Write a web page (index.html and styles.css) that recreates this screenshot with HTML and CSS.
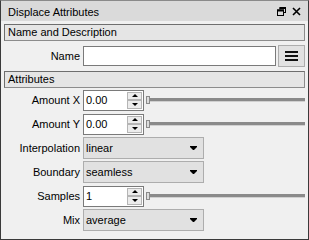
FILE: index.html
```html
<!DOCTYPE html>
<html>
<head>
<meta charset="utf-8">
<link rel="stylesheet" href="styles.css">
</head>
<body>
<div class="window">
  <div class="titlebar">
    <span class="title">Displace Attributes</span>
    <span class="tools">
      <svg class="ico" width="9" height="9" viewBox="0 0 9 9"><path d="M3 0.5h5.5v5.5M3 0.5v2M8.5 5.5h-2" fill="none" stroke="#000" stroke-width="1"/><rect x="0.5" y="3" width="6" height="5.5" fill="none" stroke="#000" stroke-width="1"/><rect x="0" y="2.5" width="7" height="2" fill="#000"/><rect x="2.5" y="0" width="6.5" height="2" fill="#000"/></svg>
      <svg class="ico" width="9" height="9" viewBox="0 0 9 9"><path d="M1 1L8 8M8 1L1 8" stroke="#000" stroke-width="1.6"/></svg>
    </span>
  </div>
  <div class="content">
    <div class="section">Name and Description</div>
    <div class="row name-row">
      <span class="lbl">Name</span>
      <div class="textfield"></div>
      <div class="menubtn"><span></span><span></span><span></span></div>
    </div>
    <div class="section">Attributes</div>
    <div class="form">
      <div class="row">
        <span class="lbl">Amount X</span>
        <div class="spin"><span class="val">0.00</span><span class="arrows"><i class="up"></i><i class="dn"></i></span></div>
        <div class="slider"><span class="handle"></span></div>
      </div>
      <div class="row">
        <span class="lbl">Amount Y</span>
        <div class="spin"><span class="val">0.00</span><span class="arrows"><i class="up"></i><i class="dn"></i></span></div>
        <div class="slider"><span class="handle"></span></div>
      </div>
      <div class="row">
        <span class="lbl">Interpolation</span>
        <div class="combo"><span class="val">linear</span><span class="caret"></span></div>
      </div>
      <div class="row">
        <span class="lbl">Boundary</span>
        <div class="combo"><span class="val">seamless</span><span class="caret"></span></div>
      </div>
      <div class="row">
        <span class="lbl">Samples</span>
        <div class="spin"><span class="val">1</span><span class="arrows"><i class="up"></i><i class="dn"></i></span></div>
        <div class="slider"><span class="handle"></span></div>
      </div>
      <div class="row">
        <span class="lbl">Mix</span>
        <div class="combo"><span class="val">average</span><span class="caret"></span></div>
      </div>
    </div>
  </div>
</div>
</body>
</html>
```

FILE: styles.css
```css
* { box-sizing: border-box; }
html, body { margin: 0; padding: 0; }
body {
  width: 309px; height: 240px; overflow: hidden;
  font-family: "Liberation Sans", Arial, sans-serif;
  font-size: 11px; color: #000;
}
.window {
  width: 309px; height: 240px;
  background: #f0f0f0;
  border: 1px solid #3a3a3a;
  border-top-color: #8a8a8a;
  display: flex; flex-direction: column;
}
.titlebar {
  height: 20px; background: #dadada; flex: none;
  display: flex; align-items: center; justify-content: space-between;
  padding: 1px 7px 0 7px;
}
.tools { display: flex; gap: 6px; align-items: center; }
.ico { display: block; }
.content { padding: 3px 3px 0 3px; display: flex; flex-direction: column; }
.section {
  height: 17px; line-height: 15px; flex: none;
  background: #e5e5e5;
  border: 1px solid #8c8c8c;
  border-top-color: #6e6e6e; border-left-color: #6e6e6e;
  padding-left: 3px;
}
.row { display: flex; align-items: center; height: 24px; flex: none; }
.name-row { height: 22px; margin: 4px 0 4px; }
.lbl { width: 79px; min-width: 79px; text-align: right; padding-right: 3px; flex: none; white-space: nowrap; }
.textfield {
  width: 193px; height: 20px; background: #fff;
  border: 1px solid #7a7a7a; flex: none;
}
.menubtn {
  margin-left: 2px; width: 27px; height: 22px; flex: none;
  background: #e1e1e1; border: 1px solid #adadad;
  display: flex; flex-direction: column; align-items: center; justify-content: center; gap: 2px;
}
.menubtn span { display: block; width: 13px; height: 2px; background: #111; }
.form { display: flex; flex-direction: column; }
.spin {
  width: 61px; height: 21px; background: #fff;
  border: 1px solid #7a7a7a; flex: none;
  display: flex; align-items: center; justify-content: space-between;
  padding-left: 2px;
}
.arrows {
  width: 15px; height: 17px; margin-right: 1px;
  display: flex; flex-direction: column;
}
.arrows i {
  flex: 1; background: #ececec; border: 1px solid #b5b5b5; position: relative;
}
.arrows i::after {
  content: ""; position: absolute; left: 50%; top: 50%;
  width: 0; height: 0; margin-left: -3px;
  border-left: 3px solid transparent; border-right: 3px solid transparent;
}
.arrows .up::after { margin-top: -2px; border-bottom: 3px solid #000; }
.arrows .dn::after { margin-top: -1px; border-top: 3px solid #000; }
.slider {
  flex: 1; height: 8px; margin-left: 2px; position: relative;
  display: flex; align-items: center;
}
.slider::before {
  content: ""; display: block; width: 100%; height: 3px;
  background: #8a8a8a; border-bottom: 1px solid #d0d0d0;
}
.handle {
  position: absolute; left: 0; top: 0; width: 4px; height: 8px;
  background: #dcdcdc; border: 1px solid #8a8a8a;
}
.combo {
  width: 121px; min-width: 121px; max-width: 121px; height: 22px; background: #e1e1e1;
  border: 1px solid #adadad; flex: none;
  display: flex; align-items: center; justify-content: space-between;
  padding: 0 6px 0 2px;
}
.caret {
  display: block; width: 7px; height: 4px; background: #000;
  clip-path: polygon(0 0, 100% 0, 100% 25%, 57% 100%, 43% 100%, 0 25%);
}
```
